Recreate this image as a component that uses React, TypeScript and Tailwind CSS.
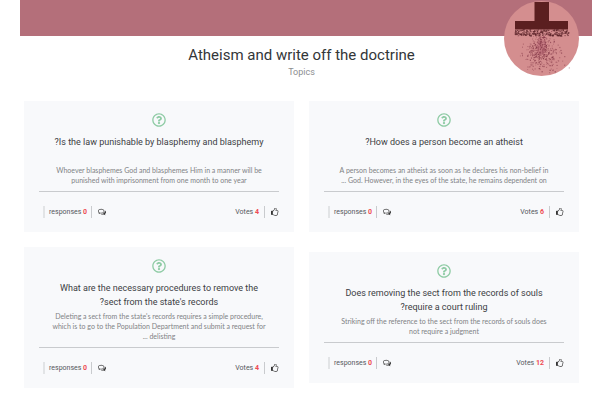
import { FaRegQuestionCircle } from "react-icons/fa";

type Topic = {
  id: number;
  question: string;
  answer: string;
  votes: number;
  responses: number;
};

const topics: Topic[] = [
  {
    id: 1,
    question: "How does a person become an atheist?",
    answer:
      "A person becomes an atheist as soon as he declares his non-belief in God. However, in the eyes of the state, he remains dependent on ...",
    votes: 6,
    responses: 0,
  },
  {
    id: 2,
    question: "Is the law punishable by blasphemy and blasphemy?",
    answer:
      "Whoever blasphemes God and blasphemes Him in a manner will be punished with imprisonment from one month to one year",
    votes: 4,
    responses: 0,
  },
  {
    id: 3,
    question: "Does removing the sect from the records of souls require a court ruling?",
    answer:
      "Striking off the reference to the sect from the records of souls does not\u00a0require a judgment",
    votes: 12,
    responses: 0,
  },
  {
    id: 4,
    question: "What are the necessary procedures to remove the sect from the state's records?",
    answer:
      "Deleting a sect from the state's records requires a simple procedure, which is to go to the Population Department and submit a request for delisting ...",
    votes: 4,
    responses: 0,
  },
];

// Small seeded generator so the dust looks the same on every render
const random = (seed: number) => () => {
  seed = (seed * 16807) % 2147483647;
  return seed / 2147483647;
};

const next = random(4217);

const crumbs = Array.from({ length: 190 }, () => ({
  x: 10 + next() * 54,
  y: 28 + next() * 6.5,
  size: 0.8 + next() * 0.7,
}));

const dust = Array.from({ length: 440 }, () => {
  const depth = (next() + next()) / 2;
  const spread = (next() + next() + next() - 1.5) * (8 + depth * 16);
  return {
    x: 37.5 + spread,
    y: 29 + depth * 43,
    size: 0.6 + next() * 0.6,
    opacity: 0.35 + next() * 0.4,
  };
});

const Logo = () => {
  return (
    <svg
      className="absolute right-[13px] top-[1px] size-[75px]"
      viewBox="0 0 75 75"
      aria-hidden="true"
    >
      <circle cx="37.5" cy="37.5" r="37.5" fill="#d48e8f" />
      <path d="M30.5 1h14.5v19h19v8.5h-53v-8.5h19.5z" fill="#5b1f20" />
      <ellipse cx="37.5" cy="46" rx="5" ry="8" fill="#b45f70" opacity="0.4" />
      {crumbs.map((c, i) => (
        <rect key={i} x={c.x} y={c.y} width={c.size} height={c.size} fill="#5b2429" opacity="0.75" />
      ))}
      {dust.map((d, i) => (
        <rect
          key={i}
          x={d.x}
          y={d.y}
          width={d.size}
          height={d.size}
          fill="#7c2f40"
          opacity={d.opacity}
        />
      ))}
    </svg>
  );
};

const ThumbsUpIcon = () => {
  return (
    <svg className="size-2" viewBox="64 64 1536 1664" fill="#333" aria-hidden="true">
      <path d="M256 1408q0-26-19-45t-45-19-45 19-19 45 19 45 45 19 45-19 19-45zm1152-640q0-51-39-89.5t-89-38.5h-352q0-58 48-159.5t48-160.5q0-98-32-145t-128-47q-26 26-38 85t-30.5 125.5-59.5 109.5q-22 23-77 91-4 5-23 30t-31.5 41-34.5 42.5-40 44-38.5 35.5-40 27-35.5 9h-32v640h32q13 0 31.5 3t33 6.5 38 11 35 11.5 35.5 12.5 29 10.5q211 73 342 73h121q192 0 192-167 0-26-5-56 30-16 47.5-52.5t17.5-73.5-18-69q53-50 53-119 0-25-10-55.5t-25-47.5q32-1 53.5-47t21.5-81zm128-1q0 89-49 163 9 33 9 69 0 77-38 144 3 21 3 43 0 101-60 178 1 139-85 219.5t-227 80.5h-129q-96 0-189.5-22.5t-216.5-65.5q-116-40-138-40h-288q-53 0-90.5-37.5t-37.5-90.5v-640q0-53 37.5-90.5t90.5-37.5h274q36-24 137-155 58-75 107-128 24-25 35.5-85.5t30.5-126.5 62-108q39-37 90-37 84 0 151 32.5t102 101.5 35 186q0 93-48 192h176q104 0 180 76t76 179z" />
    </svg>
  );
};

const CommentsIcon = () => {
  return (
    <svg className="size-2" viewBox="0 128 1792 1664" fill="#333" aria-hidden="true">
      <path d="M704 384q-153 0-286 52t-211.5 141-78.5 191q0 82 53 158t149 132l97 56-35 84q34-20 62-39l44-31 53 10q78 14 153 14 153 0 286-52t211.5-141 78.5-191-78.5-191-211.5-141-286-52zm0-128q191 0 353.5 68.5t256.5 186.5 94 257-94 257-256.5 186.5-353.5 68.5q-86 0-176-16-124 88-278 128-36 9-86 16h-3q-11 0-20.5-8t-11.5-21q-1-3-1-6.5t.5-6.5 2-6l2.5-5 3.5-5.5 4-5 4.5-5 4-4.5q5-6 23-25t26-29.5 22.5-29 25-38.5 20.5-44q-124-72-195-177t-71-224q0-139 94-257t256.5-186.5 353.5-68.5zm822 1169q10 24 20.5 44t25 38.5 22.5 29 26 29.5 23 25q1 1 4 4.5t4.5 5 4 5 3.5 5.5l2.5 5 2 6 .5 6.5-1 6.5q-3 14-13 22t-22 7q-50-7-86-16-154-40-278-128-90 16-176 16-271 0-472-132 58 4 88 4 161 0 309-45t264-129q125-92 192-212t67-254q0-77-23-152 129 71 204 178t75 230q0 120-71 224.5t-195 176.5z" />
    </svg>
  );
};

const TopicCard = ({ topic }: { topic: Topic }) => {
  return (
    <article className="bg-[#f8f9fb] px-[15px] pt-3 pb-[14px] flex flex-col">
      <FaRegQuestionCircle className="self-center size-[14px] text-[#8ecba4]" />
      <h2 className="mt-2 px-3 min-h-7 text-[9px] leading-[14px] text-center text-[#3c4043]">
        {topic.question}
      </h2>
      <p className="mt-[2px] px-3 font-['Lato',sans-serif] text-[7px] leading-[10px] text-center text-[#808285]">
        {topic.answer}
      </p>
      <div className="mt-[6px] pt-[14px] border-t border-[#c9cbce] flex justify-between items-center text-[7px] leading-3 text-[#55585b]">
        <button type="button" className="flex items-center gap-[6px]">
          <ThumbsUpIcon />
          <span className="border-r border-[#c9cbce] pr-[5px]">
            Votes <b className="text-[#ee4b52]">{topic.votes}</b>
          </span>
        </button>
        <button type="button" className="flex items-center gap-[6px] ml-1">
          <CommentsIcon />
          <span className="border-r border-l-2 border-r-[#c9cbce] border-l-[#e2e4e6] px-1">
            responses <b className="text-[#ee4b52]">{topic.responses}</b>
          </span>
        </button>
      </div>
    </article>
  );
};

const App = () => {
  return (
    <div dir="rtl" className="bg-white px-5 font-['Roboto',sans-serif]">
      <div className="relative">
        <div className="h-9 bg-[#b46f7a]" />
        <Logo />
      </div>
      <main className="pl-1 pr-[13px] pt-2">
        <header className="text-center mb-[23px]">
          <h1 className="text-[15px] leading-[22px] text-[#333638]">
            Atheism and write off the doctrine
          </h1>
          <p className="text-[9px] leading-3 text-[#8b8d90]">Topics</p>
        </header>
        <section className="grid grid-cols-2 items-center gap-[15px]">
          {topics.map((topic) => (
            <TopicCard key={topic.id} topic={topic} />
          ))}
        </section>
      </main>
    </div>
  );
};

export default App;
